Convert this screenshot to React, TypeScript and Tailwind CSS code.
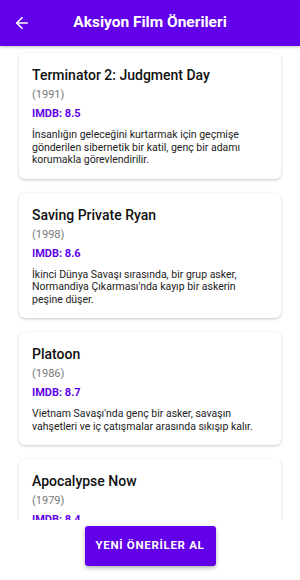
import { ArrowLeft } from 'lucide-react'

interface Movie {
  title: string
  year: number
  imdb: string
  desc: string
}

const movies: Movie[] = [
  {
    title: 'Terminator 2: Judgment Day',
    year: 1991,
    imdb: '8.5',
    desc: 'İnsanlığın geleceğini kurtarmak için geçmişe gönderilen sibernetik bir katil, genç bir adamı korumakla görevlendirilir.',
  },
  {
    title: 'Saving Private Ryan',
    year: 1998,
    imdb: '8.6',
    desc: "İkinci Dünya Savaşı sırasında, bir grup asker, Normandiya Çıkarması'nda kayıp bir askerin peşine düşer.",
  },
  {
    title: 'Platoon',
    year: 1986,
    imdb: '8.7',
    desc: "Vietnam Savaşı'nda genç bir asker, savaşın vahşetleri ve iç çatışmalar arasında sıkışıp kalır.",
  },
  {
    title: 'Apocalypse Now',
    year: 1979,
    imdb: '8.4',
    desc: "Vietnam Savaşı sırasında bir yüzbaşı, Kamboçya'da kendi ordusunu kuran bir albayı bulmakla görevlendirilir.",
  },
]

function MovieCard({ movie }: { movie: Movie }) {
  return (
    <div className="rounded-md bg-white px-[13px] pt-3 pb-3 shadow-[0_1px_3px_rgba(0,0,0,0.22)]">
      <p className="text-[14px] leading-[20px] font-medium text-[#111]">{movie.title}</p>
      <p className="mt-[3px] text-[11px] leading-[14px] text-[#777]">({movie.year})</p>
      <p className="mt-[5px] text-[11px] leading-[14px] font-bold text-[#6200ea]">IMDB: {movie.imdb}</p>
      <p className="mt-2 text-[10.5px] leading-[12.5px] text-[#222]">{movie.desc}</p>
    </div>
  )
}

export default function App() {
  return (
    <div className="flex h-[580px] w-[300px] flex-col bg-white font-['Roboto',sans-serif]">
      <div className="flex h-[46px] shrink-0 items-center bg-[#6200ea] px-[13px] shadow-[0_1px_3px_rgba(0,0,0,0.25)]">
        <ArrowLeft className="h-[18px] w-[18px] text-white" strokeWidth={2.2} />
        <h1 className="flex-1 pr-[18px] text-center text-[15.5px] font-bold text-white">Aksiyon Film Önerileri</h1>
      </div>

      <div className="h-[474px] shrink-0 overflow-hidden">
        <div className="flex flex-col gap-[14px] px-[19px] pt-[7px] pb-4">
          {movies.map((m) => (
            <MovieCard key={m.title} movie={m} />
          ))}
        </div>
      </div>

      <div className="flex flex-1 items-start justify-center pt-[6px]">
        <button className="h-10 w-[131px] rounded-[3px] bg-[#6200ea] text-[11.5px] font-bold tracking-[0.06em] text-white shadow-[0_2px_4px_rgba(0,0,0,0.3)]">
          YENİ ÖNERİLER AL
        </button>
      </div>
    </div>
  )
}
